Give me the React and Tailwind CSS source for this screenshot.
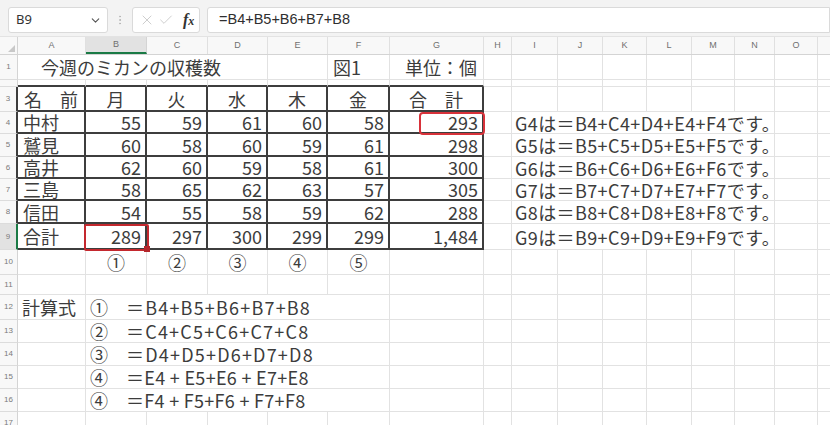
import { ChevronDown, X, Check, EllipsisVertical } from 'lucide-react'

const COLS = [
  { k: 'A', w: 'w-[68px]' },
  { k: 'B', w: 'w-[61px]' },
  { k: 'C', w: 'w-[61px]' },
  { k: 'D', w: 'w-[60px]' },
  { k: 'E', w: 'w-[60px]' },
  { k: 'F', w: 'w-[62px]' },
  { k: 'G', w: 'w-[94px]' },
  { k: 'H', w: 'w-[28px]' },
  { k: 'I', w: 'w-[46px]' },
  { k: 'J', w: 'w-[45px]' },
  { k: 'K', w: 'w-[44px]' },
  { k: 'L', w: 'w-[45px]' },
  { k: 'M', w: 'w-[43px]' },
  { k: 'N', w: 'w-[40px]' },
  { k: 'O', w: 'w-[43px]' },
  { k: 'P', w: 'w-[60px]' },
]

const ROWS = [
  { n: 1, h: 'h-[25px]' },
  { n: 2, h: 'h-[7px]' },
  { n: 3, h: 'h-[25px]' },
  { n: 4, h: 'h-[22px]' },
  { n: 5, h: 'h-[23px]' },
  { n: 6, h: 'h-[22px]' },
  { n: 7, h: 'h-[22px]' },
  { n: 8, h: 'h-[23px]' },
  { n: 9, h: 'h-[26px]' },
  { n: 10, h: 'h-[25px]' },
  { n: 11, h: 'h-[20px]' },
  { n: 12, h: 'h-[25px]' },
  { n: 13, h: 'h-[23px]' },
  { n: 14, h: 'h-[23px]' },
  { n: 15, h: 'h-[23px]' },
  { n: 16, h: 'h-[23px]' },
  { n: 17, h: 'h-[23px]' },
]

const TABLE = [
  ['中村', '55', '59', '61', '60', '58', '293'],
  ['鷲見', '60', '58', '60', '59', '61', '298'],
  ['高井', '62', '60', '59', '58', '61', '300'],
  ['三島', '58', '65', '62', '63', '57', '305'],
  ['信田', '54', '55', '58', '59', '62', '288'],
  ['合計', '289', '297', '300', '299', '299', '1,484'],
]

const FORMULAS = [
  ['①', '＝B4+B5+B6+B7+B8', 'tracking-[1.2px]'],
  ['②', '＝C4+C5+C6+C7+C8', 'tracking-[1.2px]'],
  ['③', '＝D4+D5+D6+D7+D8', 'tracking-[1.2px]'],
  ['④', '＝E4 + E5+E6 + E7+E8', 'tracking-[0.3px]'],
  ['④', '＝F4 + F5+F6 + F7+F8', 'tracking-[0.3px]'],
]

// cell contents, keyed like A1
const DATA = {
  A1: { t: '今週のミカンの収穫数', c: 'pl-[23px]' },
  F1: { t: '図1', c: 'pl-[5px]' },
  G1: { t: '単位：個', c: 'pl-[15px]' },
  A3: { t: '名　前', c: 'pl-[6px]' },
  B3: { t: '月', c: 'justify-center' },
  C3: { t: '火', c: 'justify-center' },
  D3: { t: '水', c: 'justify-center' },
  E3: { t: '木', c: 'justify-center' },
  F3: { t: '金', c: 'justify-center' },
  G3: { t: '合　計', c: 'justify-center' },
  A12: { t: '計算式', c: 'pl-[4px]' },
}

TABLE.forEach((row, i) => {
  const n = i + 4
  row.forEach((v, ci) => {
    DATA[COLS[ci].k + n] = ci === 0 ? { t: v, c: 'pl-[5px]' } : { t: v, c: 'justify-end pr-[4px]' }
  })
  DATA['I' + n] = {
    t: <span className="tracking-[0.4px]">{`G${n}は＝B${n}+C${n}+D${n}+E${n}+F${n}です。`}</span>,
    c: 'pl-[3px]',
  }
})

;['①', '②', '③', '④', '⑤'].forEach((t, i) => {
  DATA[COLS[i + 1].k + 10] = { t, c: 'justify-center' }
})

FORMULAS.forEach(([mark, f, tr], i) => {
  DATA['B' + (12 + i)] = {
    t: (
      <>
        <span className="shrink-0 w-[36px]">{mark}</span>
        <span className={`shrink-0 ${tr}`}>{f}</span>
      </>
    ),
    c: 'pl-[4px]',
  }
})

const NO_RIGHT = {
  1: ['A', 'B', 'C'],
  4: ['I', 'J', 'K', 'L', 'M'],
  5: ['I', 'J', 'K', 'L', 'M'],
  6: ['I', 'J', 'K', 'L', 'M'],
  7: ['I', 'J', 'K', 'L', 'M'],
  8: ['I', 'J', 'K', 'L', 'M'],
  9: ['I', 'J', 'K', 'L', 'M'],
  12: ['B', 'C', 'D', 'E'],
  13: ['B', 'C', 'D', 'E'],
  14: ['B', 'C', 'D', 'E'],
  15: ['B', 'C', 'D', 'E'],
  16: ['B', 'C', 'D', 'E'],
}

function Cell({ col, ci, n, h }) {
  const inTable = n >= 3 && n <= 9 && ci <= 6
  const right = inTable
    ? 'border-r-2 border-r-[#3d3d3d]'
    : (NO_RIGHT[n] || []).includes(col.k)
      ? ''
      : 'border-r border-r-[#e2e2e2]'
  const bottom = inTable || (n === 2 && ci <= 6) ? 'border-b-2 border-b-[#3d3d3d]' : 'border-b border-b-[#e2e2e2]'
  const d = DATA[col.k + n]
  return (
    <div className={`${col.w} ${h} shrink-0 flex items-center whitespace-nowrap ${right} ${bottom} ${d ? d.c : ''}`}>
      {d && d.t}
    </div>
  )
}

function Toolbar() {
  return (
    <div className="h-[37px] bg-[#f3f3f3] border-b border-[#e3e3e3] flex items-start pt-[7px] pl-[8px] gap-[2px] font-['Noto_Sans',sans-serif]">
      <div className="w-[100px] h-[26px] bg-white border border-[#dadada] rounded-[3px] flex items-center justify-between pl-[7px] pr-[5px]">
        <span className="text-[13px] text-[#333]">B9</span>
        <ChevronDown size={13} className="text-[#555]" strokeWidth={2} />
      </div>
      <div className="w-[20px] h-[26px] flex items-center justify-center">
        <EllipsisVertical size={12} className="text-[#b5b5b5]" />
      </div>
      <div className="w-[68px] h-[26px] bg-white border border-[#dadada] rounded-[3px] flex items-center pl-[6px] gap-[3px]">
        <X size={16} strokeWidth={1.3} className="text-[#c6c6c6]" />
        <Check size={16} strokeWidth={1.3} className="text-[#c6c6c6]" />
        <span className="ml-[6px] font-['Liberation_Serif',serif] italic font-bold text-[16px] text-[#333] leading-none">
          f<span className="text-[12px]">x</span>
        </span>
      </div>
      <div className="flex-1 ml-[5px] h-[26px] bg-white border border-[#dadada] rounded-l-[3px] flex items-center pl-[11px]">
        <span className="text-[14.5px] text-[#2f2f2f] font-['Liberation_Sans',sans-serif]">=B4+B5+B6+B7+B8</span>
      </div>
    </div>
  )
}

export default function App() {
  return (
    <div className="relative w-[830px] h-[425px] overflow-hidden bg-white">
      <Toolbar />

      {/* column headers */}
      <div className="flex h-[18px] bg-[#f8f8f8] border-b border-[#d4d4d4] font-['Liberation_Sans',sans-serif]">
        <div className="w-[18px] shrink-0 border-r border-[#d4d4d4] flex items-end justify-end p-[2px]">
          <svg width="7" height="7" viewBox="0 0 7 7">
            <path d="M7 0 L7 7 L0 7 Z" fill="#c8c8c8" />
          </svg>
        </div>
        {COLS.map((c) => (
          <div
            key={c.k}
            className={`${c.w} shrink-0 flex items-center justify-center text-[9px] text-[#707070] ${
              c.k === 'B' ? 'bg-[#e2e2e2] border-b-2 border-b-[#1a7a45] border-r border-r-[#d4d4d4]' : 'border-r border-r-[#e0e0e0]'
            }`}
          >
            {c.k === 'P' ? '' : c.k}
          </div>
        ))}
      </div>

      {/* grid */}
      <div className="font-['Noto_Sans_CJK_JP',sans-serif] text-[18px] leading-none text-[#3c3c3c]">
        {ROWS.map((r) => (
          <div key={r.n} className="flex">
            <div
              className={`w-[18px] ${r.h} shrink-0 flex items-center justify-center overflow-hidden text-[8px] text-[#7a7a7a] font-['Liberation_Sans',sans-serif] border-b border-b-[#dcdcdc] ${
                r.n === 9
                  ? 'bg-[#e2e2e2] border-r-2 border-r-[#1a7a45]'
                  : r.n >= 3 && r.n <= 8
                    ? 'bg-[#f8f8f8] border-r-2 border-r-[#3d3d3d]'
                    : 'bg-[#f8f8f8] border-r border-r-[#d4d4d4]'
              }`}
            >
              {r.n === 2 ? '' : r.n}
            </div>
            {COLS.map((c, ci) => (
              <Cell key={c.k} col={c} ci={ci} n={r.n} h={r.h} />
            ))}
          </div>
        ))}
      </div>

      {/* red markers drawn over the sheet */}
      <div className="absolute left-[419px] top-[112px] w-[66px] h-[23px] border-2 border-[#d8323a] rounded-[4px]" />
      <div className="absolute left-[84px] top-[224px] w-[65px] h-[27px] border-2 border-[#c4282e] rounded-[2px]" />
      <div className="absolute left-[144px] top-[246px] w-[6px] h-[6px] bg-[#b3262b]" />
    </div>
  )
}
